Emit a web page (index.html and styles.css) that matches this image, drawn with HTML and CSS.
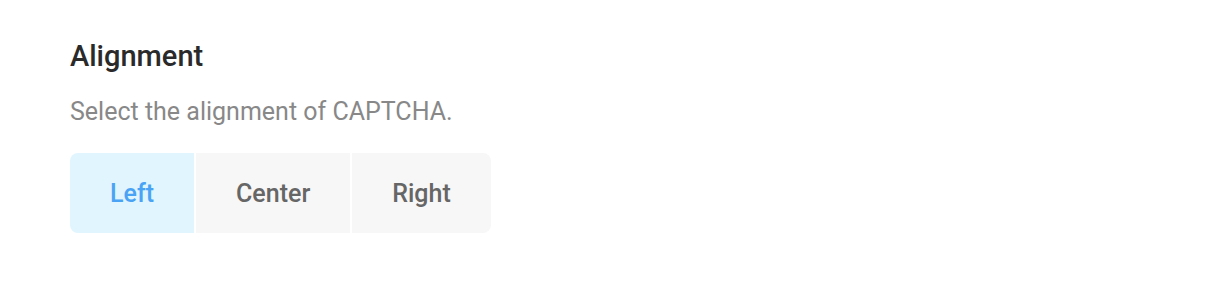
FILE: index.html
```html
<!DOCTYPE html>
<html>
<head>
<meta charset="utf-8">
<link rel="stylesheet" href="styles.css">
</head>
<body>
<div class="section">
  <h2 class="title">Alignment</h2>
  <p class="desc">Select the alignment of CAPTCHA.</p>
  <div class="segmented">
    <button class="seg active">Left</button>
    <button class="seg">Center</button>
    <button class="seg">Right</button>
  </div>
</div>
</body>
</html>
```
FILE: styles.css
```css
html, body {
  margin: 0;
  padding: 0;
  background: #ffffff;
}
body {
  font-family: Roboto, "Liberation Sans", sans-serif;
}
.section {
  padding: 37px 70px 0 70px;
}
.title {
  margin: 0;
  font-size: 29px;
  font-weight: 500;
  line-height: 38px;
  color: #2a2a2a;
}
.desc {
  margin: 21px 0 0 0;
  font-size: 25px;
  line-height: 32px;
  color: #888888;
}
.segmented {
  display: inline-flex;
  gap: 2px;
  margin-top: 25px;
  border-radius: 8px;
  overflow: hidden;
}
.seg {
  border: none;
  margin: 0;
  height: 80px;
  padding: 0 40px;
  font-family: Roboto, "Liberation Sans", sans-serif;
  font-size: 25px;
  font-weight: 500;
  background: #f7f7f7;
  color: #666666;
}
.seg.active {
  background: #e1f5fe;
  color: #4aa3f5;
}
```
